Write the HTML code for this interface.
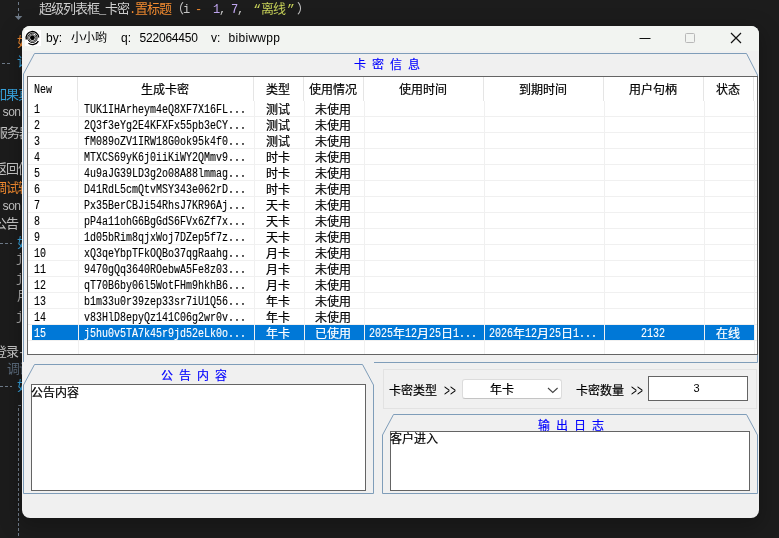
<!DOCTYPE html>
<html lang="zh-CN"><head><meta charset="utf-8"><title>卡密信息</title>
<style>
html,body{margin:0;padding:0}
body{width:779px;height:538px;overflow:hidden;background:#1c1c1c;position:relative;font-family:"Liberation Sans","Noto Sans CJK SC",sans-serif}
.abs{position:absolute}
#bg{position:absolute;left:0;top:0;width:779px;height:538px;overflow:hidden;will-change:transform}
#bg .t{position:absolute;white-space:pre;font-family:"Liberation Mono","Noto Sans CJK SC",monospace;font-size:13px;letter-spacing:-1px;line-height:16px;color:#d0d0d0}
#bg .t i{font-style:normal;display:inline-block;width:6px;letter-spacing:0;font-size:12px;text-align:center}
#bg .t u{text-decoration:none;display:inline-block;width:12px;letter-spacing:0;font-size:13px}
#win{position:absolute;left:22px;top:26px;width:737px;height:492px;background:#f0f0f0;border-radius:8px;overflow:hidden;will-change:transform}
#shadow{position:absolute;left:22px;top:26px;width:737px;height:492px;border-radius:8px;box-shadow:0 6px 20px 4px rgba(0,0,0,.22)}
#tb{position:absolute;left:0;top:0;width:737px;height:25px;background:#f2f4f1}
#ttl span{position:absolute;top:4px;font-size:12px;line-height:16px;color:#000;white-space:pre;font-family:"Liberation Sans","Noto Sans CJK SC",sans-serif}
.ss{font-family:"Liberation Mono","Noto Sans CJK SC",monospace;font-size:12px;line-height:16px;white-space:nowrap;color:#000}
.m{display:inline-block;font-size:12px;transform:scaleX(0.8332);transform-origin:0 50%;white-space:pre;position:relative;top:.5px;-webkit-text-stroke:.12px currentColor}
.k{position:relative;top:2px;-webkit-text-stroke:.2px currentColor}
#lv{position:absolute;left:5px;top:50px;width:729px;height:277px;background:#fff;border:1px solid #646464;overflow:hidden}
.hd{position:absolute;top:0px;height:24px;line-height:24px;text-align:center}
.sep{position:absolute;top:0;width:1px;height:24px;background:#e5e5e5}
.gv{position:absolute;top:24px;width:1px;height:253px;background:#f0f0f0}
.gh{position:absolute;left:0;width:729px;height:1px;background:#f0f0f0}
.c{position:absolute;height:16px;line-height:16px;overflow:hidden}
.cc{text-align:center}
.sel{position:absolute;left:4px;width:722px;height:15px;background:#0078d7}
.gt{position:absolute;color:#0000ff;font-size:12px;line-height:14px;white-space:pre;word-spacing:-1.2px;-webkit-text-stroke:.15px currentColor;font-family:"Liberation Mono","Noto Sans CJK SC",monospace}
.tx{position:absolute;background:#fff;border:1px solid #646464;box-sizing:border-box}
</style></head><body>

<div id="bg">
<div class="t" style="left:39px;top:1.5px">超级列表框<i>_</i>卡密<i style="color:#f28b30">.</i><span style="color:#f28b30">置标题</span><u style="color:#c8c8c8;text-align:right">（</u><i style="color:#c8c8c8">i</i><i> </i><i style="color:#f28b30">-</i><i> </i><i> </i><i style="color:#c0a6f0">1</i><i style="color:#c8c8c8">,</i><i> </i><i style="color:#c0a6f0">7</i><i style="color:#c8c8c8">,</i><i> </i><span style="color:#c5cf58"><u style="text-align:right">“</u>离线<u style="text-align:left;text-indent:2px">”</u></span><u style="color:#c8c8c8;text-align:left">）</u></div>
<div class="t" style="left:17px;top:35px;color:#f28b30;">如</div>
<div class="t" style="left:17px;top:55px;color:#38a5e0;">计</div>
<div class="t" style="left:-6px;top:88px;color:#38a5e0;">如果真</div>
<div class="t" style="left:-4px;top:105px;color:#c8c8c8;"><i> </i><i>s</i><i>o</i><i>n</i><i style="color:#f28b30;text-align:left">.</i></div>
<div class="t" style="left:-5px;top:126px;color:#c8c8c8;">服务器</div>
<div class="t" style="left:-6px;top:162px;color:#c8c8c8;">返回值</div>
<div class="t" style="left:-6px;top:181px;color:#f28b30;">调试输</div>
<div class="t" style="left:-4px;top:199px;color:#c8c8c8;"><i> </i><i>s</i><i>o</i><i>n</i><i style="color:#f28b30;text-align:left">.</i></div>
<div class="t" style="left:-6px;top:217px;color:#c8c8c8;">公告</div>
<div class="t" style="left:17px;top:236px;color:#38a5e0;">如</div>
<div class="t" style="left:16px;top:251px;color:#a8a8a8;"><i>j</i></div>
<div class="t" style="left:16px;top:271px;color:#a8a8a8;"><i>j</i></div>
<div class="t" style="left:17px;top:289px;color:#a8a8a8;">用</div>
<div class="t" style="left:16px;top:309px;color:#a8a8a8;"><i>j</i></div>
<div class="t" style="left:-6px;top:345px;color:#c8c8c8;">登录<i>-</i></div>
<div class="t" style="left:7px;top:362px;color:#5b6b7c;">调试</div>
<div class="t" style="left:17px;top:379px;color:#38a5e0;">如</div>
<svg class="abs" style="left:0;top:0" width="40" height="538" viewBox="0 0 40 538" fill="none" stroke="#6e7a88" stroke-width="1"><path d="M18.5 2 V5 M18.5 8 V11 M18.5 13.500 V16"/><path d="M14.800 16 H22.300 L18.500 20 Z" fill="#6e7a88" stroke="none"/><path d="M2 63.500 H10 M0 243.500 H12 M0 386.500 H12" stroke-dasharray="3 2"/><path d="M21 405.500 H18.500 V538" stroke-dasharray="3 2"/></svg>
</div>
<div id="shadow"></div>
<div id="win"><div id="tb"></div>
<div id="ttl"><span style="left:24px">by:</span><span style="left:49px">小小哟</span><span style="left:99px">q:</span><span style="left:117.5px;letter-spacing:-.2px">522064450</span><span style="left:189px">v:</span><span style="left:206.500px;letter-spacing:.3px">bibiwwpp</span></div>
<svg class="abs" style="left:0;top:0" width="737" height="492" viewBox="0 0 737 492" fill="none" stroke="#7f9db9" stroke-width="1"><polyline points="352,336.5 735.5,336.5 735.5,49 724.5,27.5 12.5,27.5 1.5,48 1.5,336"/><polygon points="12.5,338.5 340.5,338.5 351.5,359 351.5,467.5 1.5,467.5 1.5,359"/><polygon points="371.5,388.5 724.5,388.5 735.5,409 735.5,467.5 360.5,467.5 360.5,409"/></svg>
<div id="lv" class="ss">
<div class="hd" style="left:6px;text-align:left"><span class="m" style="width:21.60px;margin-right:-3.60px;">New</span></div>
<div class="sep" style="left:49px"></div>
<div class="hd" style="left:49px;width:176px"><span class="k">生成卡密</span></div>
<div class="sep" style="left:225px"></div>
<div class="hd" style="left:225px;width:50px"><span class="k">类型</span></div>
<div class="sep" style="left:275px"></div>
<div class="hd" style="left:275px;width:60px"><span class="k">使用情况</span></div>
<div class="sep" style="left:335px"></div>
<div class="hd" style="left:335px;width:120px"><span class="k">使用时间</span></div>
<div class="sep" style="left:455px"></div>
<div class="hd" style="left:455px;width:120px"><span class="k">到期时间</span></div>
<div class="sep" style="left:575px"></div>
<div class="hd" style="left:575px;width:100px"><span class="k">用户句柄</span></div>
<div class="sep" style="left:675px"></div>
<div class="hd" style="left:675px;width:50px"><span class="k">状态</span></div>
<div class="sep" style="left:725px"></div>
<div class="c" style="left:6px;top:24px;width:42px"><span class="m" style="width:7.20px;margin-right:-1.20px;">1</span></div>
<div class="c" style="left:56px;top:24px;width:168px"><span class="m" style="width:194.43px;margin-right:-32.43px;">TUK1IHArheym4eQ8XF7X16FL...</span></div>
<div class="c" style="left:238px;top:24px;width:28px"><span class="k">测试</span></div>
<div class="c" style="left:287px;top:24px;width:40px"><span class="k">未使用</span></div>
<div class="c" style="left:6px;top:40px;width:42px"><span class="m" style="width:7.20px;margin-right:-1.20px;">2</span></div>
<div class="c" style="left:56px;top:40px;width:168px"><span class="m" style="width:194.43px;margin-right:-32.43px;">2Q3f3eYg2E4KFXFx55pb3eCY...</span></div>
<div class="c" style="left:238px;top:40px;width:28px"><span class="k">测试</span></div>
<div class="c" style="left:287px;top:40px;width:40px"><span class="k">未使用</span></div>
<div class="c" style="left:6px;top:56px;width:42px"><span class="m" style="width:7.20px;margin-right:-1.20px;">3</span></div>
<div class="c" style="left:56px;top:56px;width:168px"><span class="m" style="width:194.43px;margin-right:-32.43px;">fM089oZV1IRW18G0ok95k4f0...</span></div>
<div class="c" style="left:238px;top:56px;width:28px"><span class="k">测试</span></div>
<div class="c" style="left:287px;top:56px;width:40px"><span class="k">未使用</span></div>
<div class="c" style="left:6px;top:72px;width:42px"><span class="m" style="width:7.20px;margin-right:-1.20px;">4</span></div>
<div class="c" style="left:56px;top:72px;width:168px"><span class="m" style="width:194.43px;margin-right:-32.43px;">MTXCS69yK6j0iiKiWY2QMmv9...</span></div>
<div class="c" style="left:238px;top:72px;width:28px"><span class="k">时卡</span></div>
<div class="c" style="left:287px;top:72px;width:40px"><span class="k">未使用</span></div>
<div class="c" style="left:6px;top:88px;width:42px"><span class="m" style="width:7.20px;margin-right:-1.20px;">5</span></div>
<div class="c" style="left:56px;top:88px;width:168px"><span class="m" style="width:194.43px;margin-right:-32.43px;">4u9aJG39LD3g2o08A88lmmag...</span></div>
<div class="c" style="left:238px;top:88px;width:28px"><span class="k">时卡</span></div>
<div class="c" style="left:287px;top:88px;width:40px"><span class="k">未使用</span></div>
<div class="c" style="left:6px;top:104px;width:42px"><span class="m" style="width:7.20px;margin-right:-1.20px;">6</span></div>
<div class="c" style="left:56px;top:104px;width:168px"><span class="m" style="width:194.43px;margin-right:-32.43px;">D41RdL5cmQtvMSY343e062rD...</span></div>
<div class="c" style="left:238px;top:104px;width:28px"><span class="k">时卡</span></div>
<div class="c" style="left:287px;top:104px;width:40px"><span class="k">未使用</span></div>
<div class="c" style="left:6px;top:120px;width:42px"><span class="m" style="width:7.20px;margin-right:-1.20px;">7</span></div>
<div class="c" style="left:56px;top:120px;width:168px"><span class="m" style="width:194.43px;margin-right:-32.43px;">Px35BerCBJi54RhsJ7KR96Aj...</span></div>
<div class="c" style="left:238px;top:120px;width:28px"><span class="k">天卡</span></div>
<div class="c" style="left:287px;top:120px;width:40px"><span class="k">未使用</span></div>
<div class="c" style="left:6px;top:136px;width:42px"><span class="m" style="width:7.20px;margin-right:-1.20px;">8</span></div>
<div class="c" style="left:56px;top:136px;width:168px"><span class="m" style="width:194.43px;margin-right:-32.43px;">pP4a11ohG6BgGdS6FVx6Zf7x...</span></div>
<div class="c" style="left:238px;top:136px;width:28px"><span class="k">天卡</span></div>
<div class="c" style="left:287px;top:136px;width:40px"><span class="k">未使用</span></div>
<div class="c" style="left:6px;top:152px;width:42px"><span class="m" style="width:7.20px;margin-right:-1.20px;">9</span></div>
<div class="c" style="left:56px;top:152px;width:168px"><span class="m" style="width:194.43px;margin-right:-32.43px;">1d05bRim8qjxWoj7DZep5f7z...</span></div>
<div class="c" style="left:238px;top:152px;width:28px"><span class="k">天卡</span></div>
<div class="c" style="left:287px;top:152px;width:40px"><span class="k">未使用</span></div>
<div class="c" style="left:6px;top:168px;width:42px"><span class="m" style="width:14.40px;margin-right:-2.40px;">10</span></div>
<div class="c" style="left:56px;top:168px;width:168px"><span class="m" style="width:194.43px;margin-right:-32.43px;">xQ3qeYbpTFkOQBo37qgRaahg...</span></div>
<div class="c" style="left:238px;top:168px;width:28px"><span class="k">月卡</span></div>
<div class="c" style="left:287px;top:168px;width:40px"><span class="k">未使用</span></div>
<div class="c" style="left:6px;top:184px;width:42px"><span class="m" style="width:14.40px;margin-right:-2.40px;">11</span></div>
<div class="c" style="left:56px;top:184px;width:168px"><span class="m" style="width:194.43px;margin-right:-32.43px;">9470gQq3640ROebwA5Fe8z03...</span></div>
<div class="c" style="left:238px;top:184px;width:28px"><span class="k">月卡</span></div>
<div class="c" style="left:287px;top:184px;width:40px"><span class="k">未使用</span></div>
<div class="c" style="left:6px;top:200px;width:42px"><span class="m" style="width:14.40px;margin-right:-2.40px;">12</span></div>
<div class="c" style="left:56px;top:200px;width:168px"><span class="m" style="width:194.43px;margin-right:-32.43px;">qT70B6by06l5WotFHm9hkhB6...</span></div>
<div class="c" style="left:238px;top:200px;width:28px"><span class="k">月卡</span></div>
<div class="c" style="left:287px;top:200px;width:40px"><span class="k">未使用</span></div>
<div class="c" style="left:6px;top:216px;width:42px"><span class="m" style="width:14.40px;margin-right:-2.40px;">13</span></div>
<div class="c" style="left:56px;top:216px;width:168px"><span class="m" style="width:194.43px;margin-right:-32.43px;">b1m33u0r39zep33sr7iU1Q56...</span></div>
<div class="c" style="left:238px;top:216px;width:28px"><span class="k">年卡</span></div>
<div class="c" style="left:287px;top:216px;width:40px"><span class="k">未使用</span></div>
<div class="c" style="left:6px;top:232px;width:42px"><span class="m" style="width:14.40px;margin-right:-2.40px;">14</span></div>
<div class="c" style="left:56px;top:232px;width:168px"><span class="m" style="width:194.43px;margin-right:-32.43px;">v83HlD8epyQz141C06g2wr0v...</span></div>
<div class="c" style="left:238px;top:232px;width:28px"><span class="k">年卡</span></div>
<div class="c" style="left:287px;top:232px;width:40px"><span class="k">未使用</span></div>
<div class="sel" style="top:248px"></div>
<div class="c" style="color:#fff;left:6px;top:248px;width:42px"><span class="m" style="width:14.40px;margin-right:-2.40px;">15</span></div>
<div class="c" style="color:#fff;left:56px;top:248px;width:168px"><span class="m" style="width:194.43px;margin-right:-32.43px;">j5hu0v5TA7k45r9jd52eLk0o...</span></div>
<div class="c" style="color:#fff;left:238px;top:248px;width:28px"><span class="k">年卡</span></div>
<div class="c" style="color:#fff;left:287px;top:248px;width:40px"><span class="k">已使用</span></div>
<div class="c" style="color:#fff;left:341px;top:248px;width:112px"><span class="m" style="width:28.80px;margin-right:-4.80px;">2025</span><span class="k">年</span><span class="m" style="width:14.40px;margin-right:-2.40px;">12</span><span class="k">月</span><span class="m" style="width:14.40px;margin-right:-2.40px;">25</span><span class="k">日</span><span class="m" style="width:28.80px;margin-right:-4.80px;">1...</span></div>
<div class="c" style="color:#fff;left:461px;top:248px;width:112px"><span class="m" style="width:28.80px;margin-right:-4.80px;">2026</span><span class="k">年</span><span class="m" style="width:14.40px;margin-right:-2.40px;">12</span><span class="k">月</span><span class="m" style="width:14.40px;margin-right:-2.40px;">25</span><span class="k">日</span><span class="m" style="width:28.80px;margin-right:-4.80px;">1...</span></div>
<div class="c" style="color:#fff;left:613px;top:248px;width:28px"><span class="m" style="width:28.80px;margin-right:-4.80px;">2132</span></div>
<div class="c" style="color:#fff;left:688px;top:248px;width:28px"><span class="k">在线</span></div>
<div class="gv" style="left:50px"></div>
<div class="gv" style="left:226px"></div>
<div class="gv" style="left:276px"></div>
<div class="gv" style="left:336px"></div>
<div class="gv" style="left:456px"></div>
<div class="gv" style="left:576px"></div>
<div class="gv" style="left:676px"></div>
<div class="gv" style="left:726px"></div>
<div class="gh" style="top:39px"></div>
<div class="gh" style="top:55px"></div>
<div class="gh" style="top:71px"></div>
<div class="gh" style="top:87px"></div>
<div class="gh" style="top:103px"></div>
<div class="gh" style="top:119px"></div>
<div class="gh" style="top:135px"></div>
<div class="gh" style="top:151px"></div>
<div class="gh" style="top:167px"></div>
<div class="gh" style="top:183px"></div>
<div class="gh" style="top:199px"></div>
<div class="gh" style="top:215px"></div>
<div class="gh" style="top:231px"></div>
<div class="gh" style="top:247px"></div>
<div class="gh" style="top:263px"></div>
<div class="gh" style="top:279px"></div>
</div>
<div class="gt" style="left:332px;top:33px">卡 密 信 息</div>
<div class="gt" style="left:139px;top:344px">公 告 内 容</div>
<div class="gt" style="left:516px;top:394px">输 出 日 志</div>
<div class="tx ss" style="left:9px;top:358px;width:335px;height:107px"><span class="k" style="position:absolute;left:-1px;top:1px">公告内容</span></div>
<div class="tx ss" style="left:368px;top:405px;width:360px;height:60px"><span class="k" style="position:absolute;left:-1px;top:0px">客户进入</span></div>
<div class="abs" style="left:361px;top:343px;width:374px;height:40px;border:1px solid #e2e2e2;box-sizing:border-box"></div>
<div class="abs ss" style="left:367px;top:356px"><span class="k">卡密类型</span> <span class="m" style="font-size:16px;transform:scaleX(0.6249);width:19.20px;margin-right:-7.20px;-webkit-text-stroke:0;top:1.5px;line-height:16px;vertical-align:top;">&gt;&gt;</span></div>
<div class="abs" style="left:440px;top:353px;width:100px;height:20px;background:#fff;border:1px solid #dcdcdc;border-bottom-color:#c4c4c4;border-radius:3px;box-sizing:border-box"></div>
<div class="abs ss" style="left:468px;top:355px"><span class="k">年卡</span></div>
<svg class="abs" style="left:525px;top:361px" width="12" height="7" viewBox="0 0 12 7"><path d="M1 1 L5.800 5.500 L10.600 1" fill="none" stroke="#444" stroke-width="1.100"/></svg>
<div class="abs ss" style="left:554px;top:356px"><span class="k">卡密数量</span> <span class="m" style="font-size:16px;transform:scaleX(0.6249);width:19.20px;margin-right:-7.20px;-webkit-text-stroke:0;top:1.5px;line-height:16px;vertical-align:top;">&gt;&gt;</span></div>
<div class="tx" style="left:626px;top:350px;width:100px;height:25px"></div>
<div class="abs" style="left:624.5px;top:355px;width:100px;text-align:center;font-size:11px;line-height:14px;font-family:'Liberation Sans',sans-serif">3</div>
<svg class="abs" style="left:0;top:0" width="737" height="30" viewBox="0 0 737 30" fill="none"><rect x="3" y="4" width="16" height="16" fill="#fff"/><circle cx="10.400" cy="11.800" r="2.450" fill="#000"/><circle cx="10.400" cy="11.800" r="3.500" stroke="#000" stroke-width=".700"/><circle cx="10.400" cy="11.800" r="4.700" stroke="#000" stroke-width="1"/><path d="M4.340 13.540 A6.300 6.300 0 1 1 16.700 11.600" stroke="#000" stroke-width="1.300"/><path d="M6.500 17.300 A6.700 6.700 0 0 0 16.350 15.100" stroke="#000" stroke-width="1.300"/><path d="M11.600 7.800 L13 8.700" stroke="#fff" stroke-width="1.300"/><path d="M617.500 12.500 H628.500" stroke="#111" stroke-width="1"/><rect x="663.500" y="7.500" width="9" height="9" rx="1" stroke="#b8b8b8" stroke-width="1"/><path d="M709 7 L719 17 M719 7 L709 17" stroke="#111" stroke-width="1.200"/></svg>
</div>
</body></html>
